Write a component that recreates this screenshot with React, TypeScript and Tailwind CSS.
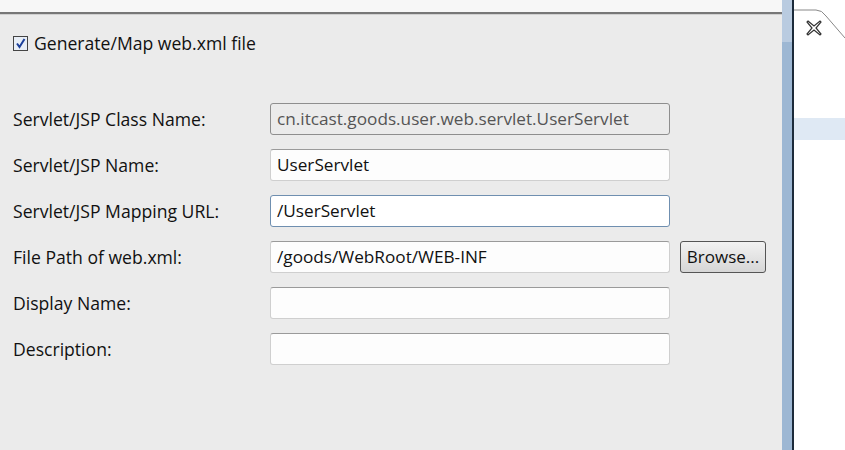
import React from "react";

const font = { fontFamily: '"Open Sans", "Noto Sans", "DejaVu Sans", sans-serif' };

function Row({ label, value, disabled, focused, browse }: { label: string; value?: string; disabled?: boolean; focused?: boolean; browse?: boolean }) {
  return (
    <div className="flex items-center h-[32px]">
      <div className="w-[270px] pl-[13px] text-[17.6px] font-medium text-[#111]">{label}</div>
      <div
        className={
          "w-[400px] h-[32px] rounded-[3px] border flex items-center px-[6px] text-[17.2px] font-medium " +
          (disabled
            ? "bg-[#ebebeb] border-[#8e8e8e] text-[#555]"
            : focused
            ? "bg-white border-[#6f8fb0] text-[#111]"
            : "bg-[#fdfdfd] border-[#cfcfcf] border-t-[#9a9a9a] text-[#111]")
        }
      >
        {value}
      </div>
      {browse && (
        <div className="ml-[10px] w-[86px] h-[32px] rounded-[3px] border border-[#555] bg-gradient-to-b from-[#f2f2f2] to-[#d6d6d6] flex items-center justify-center text-[17px] font-medium text-[#111]">
          Browse...
        </div>
      )}
    </div>
  );
}

export default function App() {
  return (
    <div className="w-[845px] h-[450px] flex overflow-hidden bg-white" style={font}>
      <div className="w-[782px] flex flex-col">
        <div className="h-[12px] bg-[#f7f7f7]" />
        <div className="h-[2px] bg-[#777]" />
        <div className="h-[1px] bg-[#d0d0d0]" />
        <div className="flex-1 bg-[#ebebeb] flex flex-col">
          <div className="flex items-center pl-[13px] mt-[20px] h-[16px]">
            <div className="w-[15px] h-[15px] border-[1.5px] border-[#444] bg-[#e8eef6] flex items-center justify-center">
              <svg width="11" height="11" viewBox="0 0 11 11">
                <path d="M2 5.5 L4.5 9 L9.5 1" stroke="#1b3f9a" strokeWidth="2" fill="none" />
              </svg>
            </div>
            <span className="ml-[6px] text-[17.6px] font-medium text-[#111]">Generate/Map web.xml file</span>
          </div>
          <div className="flex flex-col gap-[14px] mt-[52px]">
            <Row label="Servlet/JSP Class Name:" value="cn.itcast.goods.user.web.servlet.UserServlet" disabled />
            <Row label="Servlet/JSP Name:" value="UserServlet" />
            <Row label="Servlet/JSP Mapping URL:" value="/UserServlet" focused />
            <Row label="File Path of web.xml:" value="/goods/WebRoot/WEB-INF" browse />
            <Row label="Display Name:" value="" />
            <Row label="Description:" value="" />
          </div>
        </div>
      </div>
      <div className="w-[10px] flex flex-col">
        <div className="h-[42px] bg-[#b9cbe0]" />
        <div className="flex-1 bg-[#9db7d3]" />
      </div>
      <div className="w-[2px] bg-[#1c2b3b]" />
      <div className="flex-1 relative bg-white">
        <svg className="absolute left-0 top-0" width="51" height="40" viewBox="0 0 51 40">
          <path d="M0 10 H22 Q28 10 32 16 L51 38" stroke="#888" strokeWidth="1" fill="none" />
        </svg>
        <svg className="absolute left-[12px] top-[20px]" width="16" height="16" viewBox="0 0 16 16">
          <path d="M2 1 L8 6 L14 1 L15 2 L10 8 L15 14 L14 15 L8 10 L2 15 L1 14 L6 8 L1 2 Z" stroke="#333" strokeWidth="1.2" fill="white" />
        </svg>
        <div className="absolute left-0 right-0 top-[118px] h-[22px] bg-[#dfe9f4]" />
      </div>
    </div>
  );
}
